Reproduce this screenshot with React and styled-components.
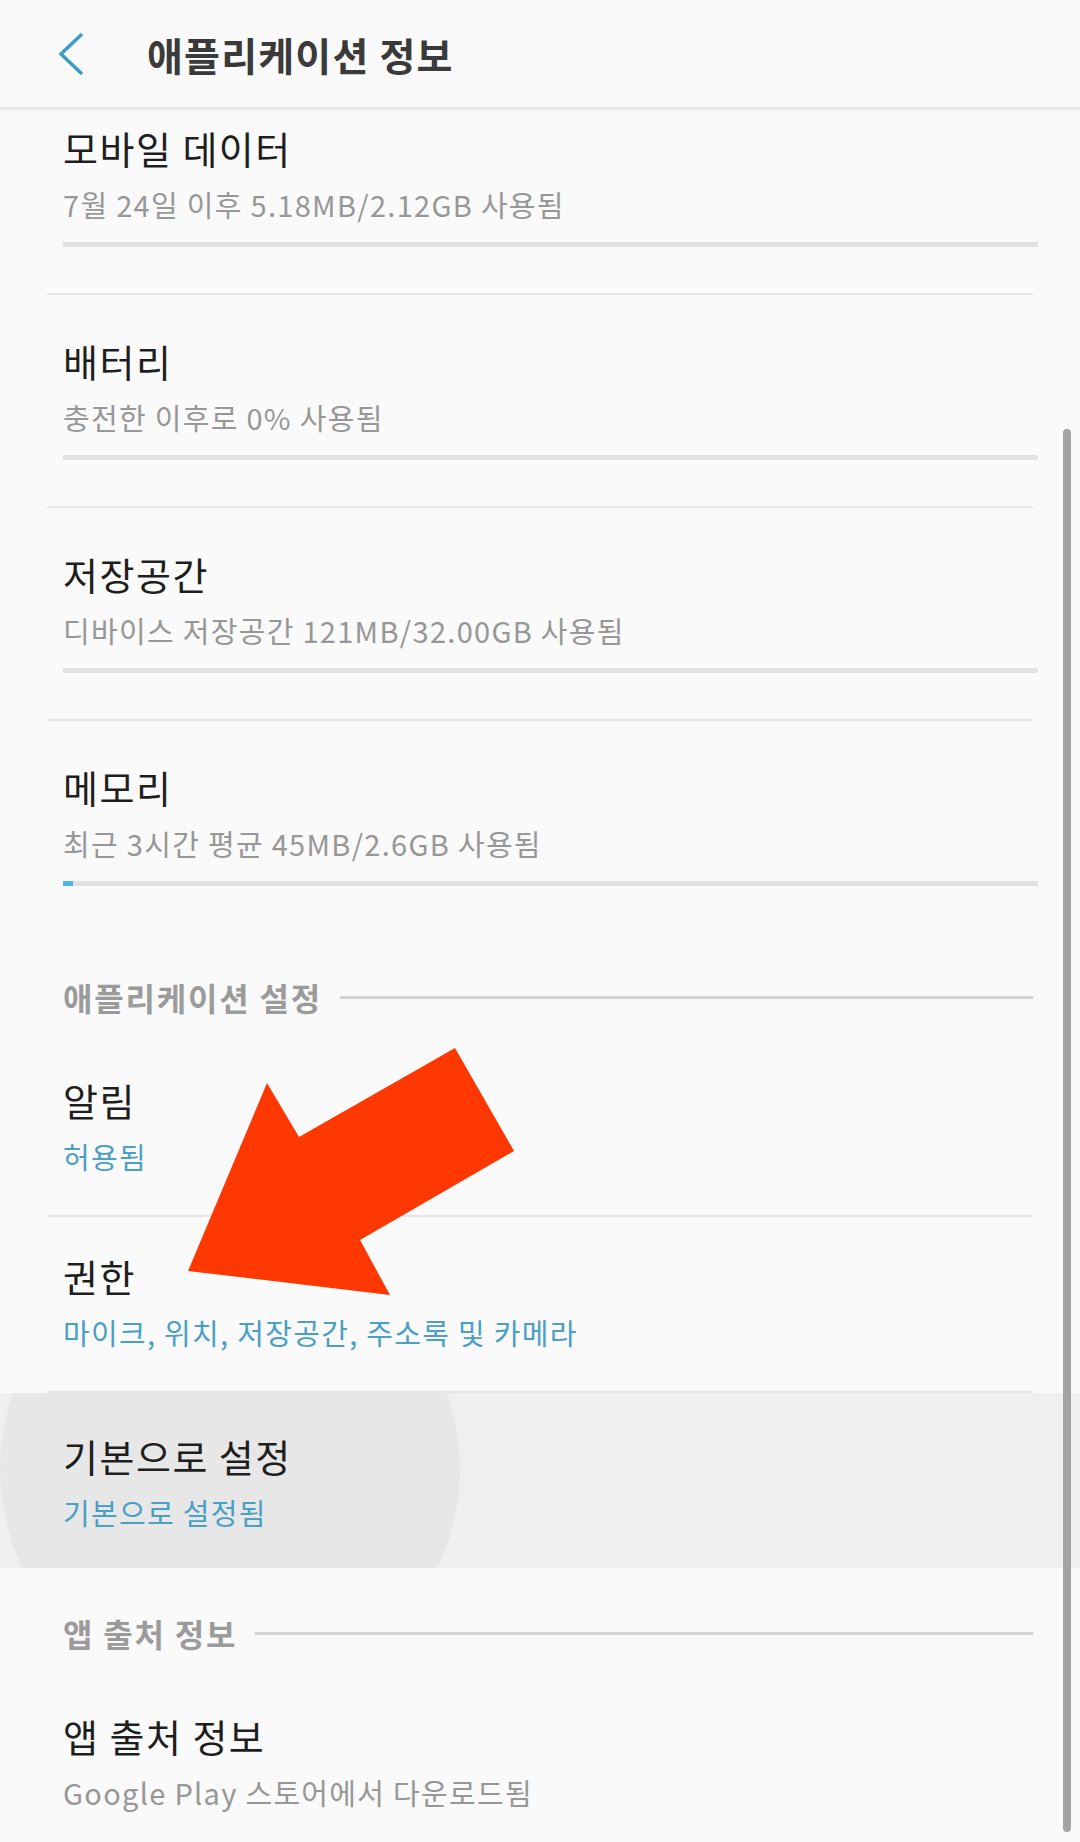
import React from "react";
import styled, { createGlobalStyle } from "styled-components";

const GlobalStyle = createGlobalStyle`
	body {
		margin: 0;
		background: #fafafa;
		font-family: "Noto Sans CJK KR", "Noto Sans", sans-serif;
	}
`;

const Page = styled.div`
	position: relative;
	width: 1080px;
	height: 1842px;
	overflow: hidden;
	background: #fafafa;
`;

const Header = styled.header`
	display: flex;
	align-items: center;
	height: 107px;
	border-bottom: 3px solid #e8e8e8;
	padding-left: 57px;
	box-sizing: content-box;
`;

const BackButton = styled.div`
	display: flex;
	align-items: center;
	width: 90px;
	height: 44px;
`;

const HeaderTitle = styled.h1`
	margin: 0;
	font-size: 39px;
	font-weight: 700;
	letter-spacing: 1.2px;
	color: #3a3a3a;
	line-height: 48px;
`;

const Item = styled.div`
	padding: ${(p) => p.$top ?? 35}px 42px ${(p) => p.$bottom ?? 39}px 63px;
	background: ${(p) => (p.$pressed ? "#efefef" : "transparent")};
	position: relative;
	overflow: hidden;
`;

const Ripple = styled.div`
	position: absolute;
	left: 0;
	top: -154px;
	width: 460px;
	height: 460px;
	border-radius: 50%;
	background: #e7e7e7;
`;

const ItemTitle = styled.div`
	position: relative;
	font-size: 38px;
	letter-spacing: 1.5px;
	line-height: 48px;
	color: #1e1e1e;
`;

const ItemSub = styled.div`
	position: relative;
	margin-top: 12px;
	font-size: 29px;
	letter-spacing: 1.3px;
	line-height: 40px;
	color: ${(p) => (p.$accent ? "#4a9fc5" : "#979797")};
`;

const Bar = styled.div`
	margin-top: 18px;
	height: 5px;
	background: #e2e2e0;
`;

const BarFill = styled.div`
	height: 100%;
	background: #4db6e2;
`;

const Divider = styled.div`
	height: 2px;
	margin: 0 47px;
	background: #e6e6e6;
`;

const SectionHeader = styled.div`
	display: flex;
	align-items: center;
	gap: 18px;
	padding: 41px 47px 20px 63px;
	font-size: 32px;
	font-weight: 700;
	letter-spacing: 1.8px;
	line-height: 48px;
	color: #9b9b9b;

	&::after {
		content: "";
		flex: 1;
		height: 3px;
		background: #d4d4d4;
	}
`;

const ScrollThumb = styled.div`
	position: absolute;
	left: 1063px;
	top: 429px;
	width: 8px;
	height: 1403px;
	border-radius: 4px;
	background: #a3a3a3;
`;

const Annotation = styled.svg`
	position: absolute;
	left: 0;
	top: 0;
	pointer-events: none;
`;

const usage = [
	{ title: "모바일 데이터", sub: "7월 24일 이후 5.18MB/2.12GB 사용됨", fill: 0, top: 14 },
	{ title: "배터리", sub: "충전한 이후로 0% 사용됨", fill: 0 },
	{ title: "저장공간", sub: "디바이스 저장공간 121MB/32.00GB 사용됨", fill: 0 },
	{ title: "메모리", sub: "최근 3시간 평균 45MB/2.6GB 사용됨", fill: 10, last: true },
];

const App = () => {
	return (
		<Page>
			<GlobalStyle />
			<Header>
				<BackButton>
					<svg width="28" height="44" viewBox="0 0 28 44">
						<polyline
							points="25,2 4,22 25,42"
							fill="none"
							stroke="#3d9cc5"
							strokeWidth="3.5"
						/>
					</svg>
				</BackButton>
				<HeaderTitle>애플리케이션 정보</HeaderTitle>
			</Header>

			{usage.map((u) => (
				<React.Fragment key={u.title}>
					<Item $top={u.top ?? 42} $bottom={46}>
						<ItemTitle>{u.title}</ItemTitle>
						<ItemSub>{u.sub}</ItemSub>
						<Bar>
							<BarFill style={{ width: `${u.fill}px` }} />
						</Bar>
					</Item>
					{!u.last && <Divider />}
				</React.Fragment>
			))}

			<SectionHeader>애플리케이션 설정</SectionHeader>
			<Item>
				<ItemTitle>알림</ItemTitle>
				<ItemSub $accent>허용됨</ItemSub>
			</Item>
			<Divider />
			<Item>
				<ItemTitle>권한</ItemTitle>
				<ItemSub $accent>마이크, 위치, 저장공간, 주소록 및 카메라</ItemSub>
			</Item>
			<Divider />
			<Item $pressed $top={39} $bottom={36}>
				<Ripple />
				<ItemTitle>기본으로 설정</ItemTitle>
				<ItemSub $accent>기본으로 설정됨</ItemSub>
			</Item>

			<SectionHeader>앱 출처 정보</SectionHeader>
			<Item>
				<ItemTitle>앱 출처 정보</ItemTitle>
				<ItemSub>Google Play 스토어에서 다운로드됨</ItemSub>
			</Item>

			<ScrollThumb />
			<Annotation width="1080" height="1842">
				<polygon
					points="455,1048 514,1151 360,1240 390,1295 188,1271 267,1083 299,1137"
					fill="#ff3700"
				/>
			</Annotation>
		</Page>
	);
};

export default App;
